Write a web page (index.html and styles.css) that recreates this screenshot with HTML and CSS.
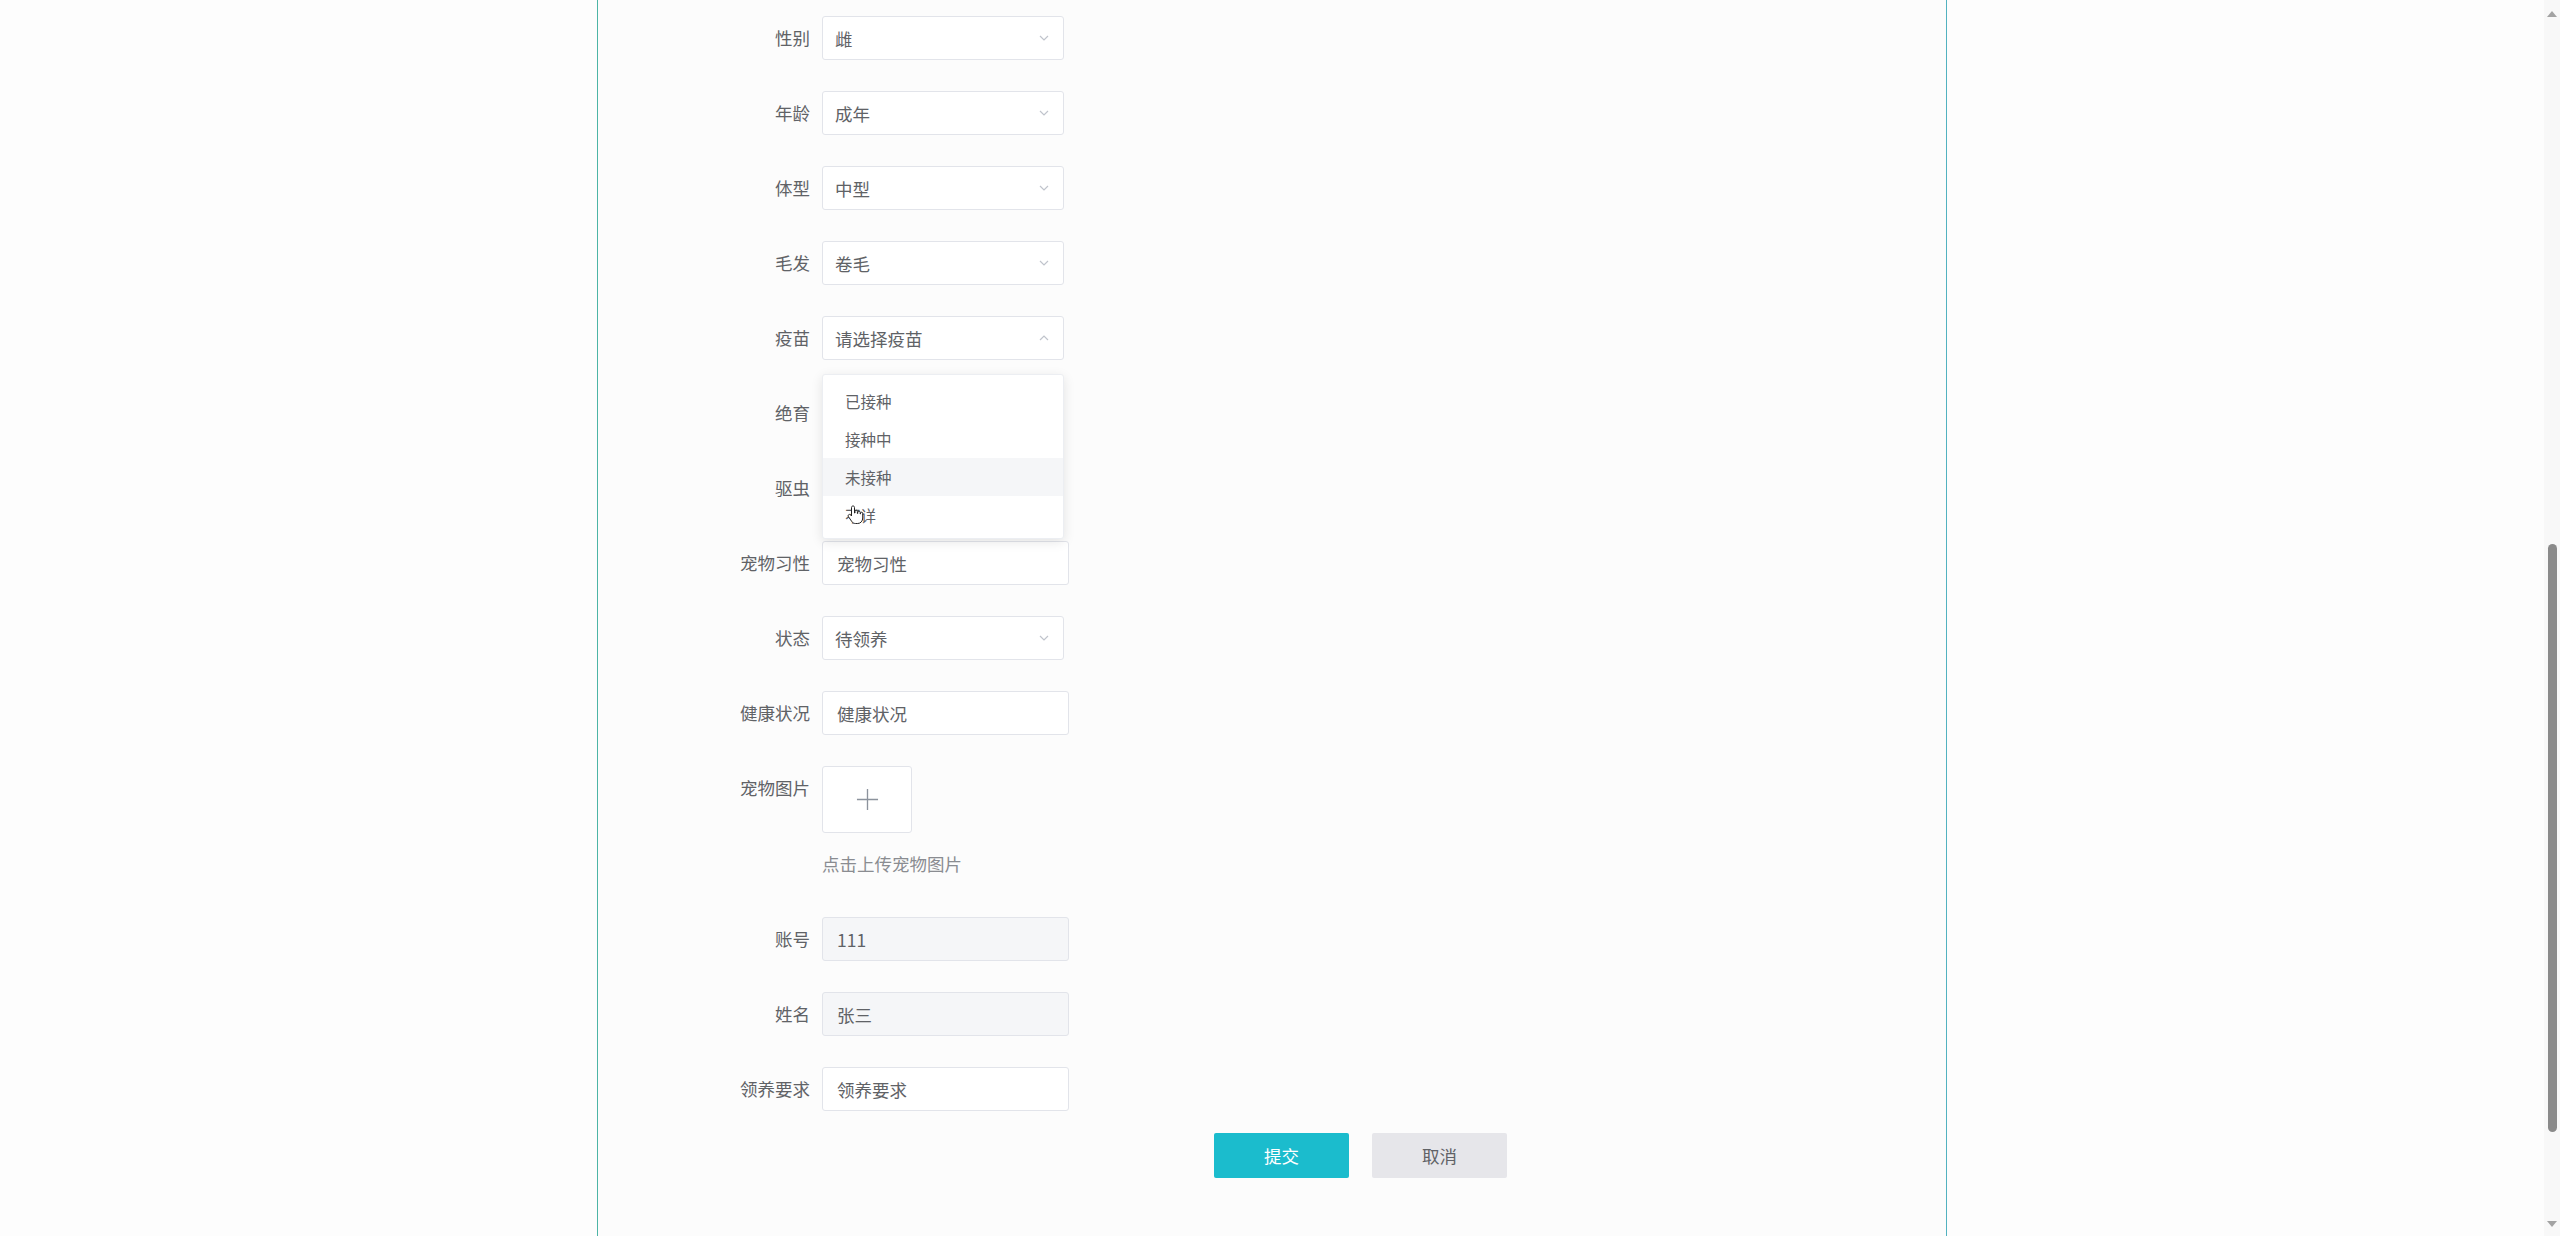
FILE: index.html
```html
<!DOCTYPE html>
<html lang="zh-CN">
<head>
  <meta charset="UTF-8" />
  <meta name="viewport" content="width=device-width, initial-scale=1.0" />
  <title>宠物信息</title>
  <link rel="stylesheet" href="styles.css">
</head>
<body>
  <div class="page">
    <main class="main">
      <section class="panel">
        <form class="pet-form">
          <div class="form-item">
            <label class="form-label">性别</label>
            <div class="select"><span>雌</span><svg class="chevron" viewBox="0 0 10 6"><path d="M1 1l4 4 4-4"/></svg></div>
          </div>
          <div class="form-item">
            <label class="form-label">年龄</label>
            <div class="select"><span>成年</span><svg class="chevron" viewBox="0 0 10 6"><path d="M1 1l4 4 4-4"/></svg></div>
          </div>
          <div class="form-item">
            <label class="form-label">体型</label>
            <div class="select"><span>中型</span><svg class="chevron" viewBox="0 0 10 6"><path d="M1 1l4 4 4-4"/></svg></div>
          </div>
          <div class="form-item">
            <label class="form-label">毛发</label>
            <div class="select"><span>卷毛</span><svg class="chevron" viewBox="0 0 10 6"><path d="M1 1l4 4 4-4"/></svg></div>
          </div>
          <div class="form-item">
            <label class="form-label">疫苗</label>
            <div class="select is-open">
              <span>请选择疫苗</span><svg class="chevron" viewBox="0 0 10 6"><path d="M1 5l4-4 4 4"/></svg>
              <ul class="dropdown">
                <li>已接种</li>
                <li>接种中</li>
                <li class="hover">未接种</li>
                <li>不详</li>
              </ul>
              <svg class="cursor" viewBox="0 0 18 20"><path d="M6 1c1 0 1.5.6 1.5 1.5V8H8V6.5c0-.8.5-1.3 1.2-1.3s1.2.5 1.2 1.3v2h.4V7.3c0-.8.5-1.2 1.2-1.2s1.2.4 1.2 1.2V9h.3v-.7c0-.7.5-1.1 1.1-1.1s1.1.4 1.1 1.1V13c0 3-2 5.5-5 5.5H8.5c-1.7 0-2.9-.8-3.8-2.1L1.4 11.6c-.5-.7-.3-1.6.4-2 .7-.4 1.5-.2 2 .4l.7 1V2.5C4.5 1.6 5 1 6 1z"/></svg>
            </div>
          </div>
          <div class="form-item">
            <label class="form-label">绝育</label>
            <div class="select"><span></span><svg class="chevron" viewBox="0 0 10 6"><path d="M1 1l4 4 4-4"/></svg></div>
          </div>
          <div class="form-item">
            <label class="form-label">驱虫</label>
            <div class="select"><span></span><svg class="chevron" viewBox="0 0 10 6"><path d="M1 1l4 4 4-4"/></svg></div>
          </div>
          <div class="form-item">
            <label class="form-label">宠物习性</label>
            <input class="input" type="text" value="宠物习性">
          </div>
          <div class="form-item">
            <label class="form-label">状态</label>
            <div class="select"><span>待领养</span><svg class="chevron" viewBox="0 0 10 6"><path d="M1 1l4 4 4-4"/></svg></div>
          </div>
          <div class="form-item">
            <label class="form-label">健康状况</label>
            <input class="input" type="text" value="健康状况">
          </div>
          <div class="form-item upload-item">
            <label class="form-label">宠物图片</label>
            <div class="upload">
              <div class="upload-box">
                <svg class="plus" viewBox="0 0 24 24"><path d="M12 1v22M1 12h22"/></svg>
              </div>
              <p class="upload-tip">点击上传宠物图片</p>
            </div>
          </div>
          <div class="form-item">
            <label class="form-label">账号</label>
            <input class="input" type="text" value="111" disabled>
          </div>
          <div class="form-item">
            <label class="form-label">姓名</label>
            <input class="input" type="text" value="张三" disabled>
          </div>
          <div class="form-item last-item">
            <label class="form-label">领养要求</label>
            <input class="input" type="text" value="领养要求">
          </div>
          <div class="actions">
            <button type="button" class="btn btn-primary">提交</button>
            <button type="button" class="btn btn-cancel">取消</button>
          </div>
        </form>
      </section>
    </main>

    <aside class="scrollbar">
      <span class="arrow arrow-up"></span>
      <span class="thumb"></span>
      <span class="arrow arrow-down"></span>
    </aside>
  </div>
</body>
</html>
```

FILE: styles.css
```css
* {
  box-sizing: border-box;
}

html, body {
  height: 100%;
}

body {
  margin: 0;
  padding: 0;
  background: #fdfdfd;
  font-family: "Noto Sans CJK SC", "Noto Sans", sans-serif;
  font-size: 17.5px;
  color: #606266;
  overflow: hidden;
}

.page {
  display: flex;
  height: 100vh;
}

.main {
  flex: 1;
  height: 100%;
}

.panel {
  width: 1350px;
  height: 100%;
  margin: 0 auto;
  background: #fcfcfc;
  border-left: 1px solid #4db5a6;
  border-right: 1px solid #52b2c0;
}

.pet-form {
  padding-top: 16px;
}

.form-item {
  display: flex;
  align-items: flex-start;
  margin-bottom: 31px;
}

.form-label {
  width: 224px;
  padding-right: 12px;
  text-align: right;
  line-height: 44px;
  color: #606266;
}

.select {
  position: relative;
  display: flex;
  align-items: center;
  justify-content: space-between;
  width: 242px;
  height: 44px;
  padding: 0 14px 0 12px;
  background: #fff;
  border: 1px solid #e2e4ea;
  border-radius: 3px;
}

.chevron {
  width: 10px;
  height: 6px;
  fill: none;
  stroke: #c0c4cc;
  stroke-width: 1.2;
}

.dropdown {
  position: absolute;
  top: calc(100% + 15px);
  left: -1px;
  width: 242px;
  margin: 0;
  padding: 7px 0 4px;
  list-style: none;
  background: #fff;
  border: 1px solid #eceef2;
  border-radius: 3px;
  box-shadow: 0 3px 12px rgba(0, 0, 0, 0.1);
  z-index: 5;
}

.dropdown li {
  height: 38px;
  line-height: 38px;
  padding-left: 22px;
  font-size: 15.5px;
  color: #606266;
}

.dropdown li.hover {
  background: #f5f6f8;
}

.cursor {
  position: absolute;
  left: 24px;
  top: 188px;
  width: 18px;
  height: 20px;
  fill: #fff;
  stroke: #222;
  stroke-width: 1;
  z-index: 6;
}

.input {
  width: 247px;
  height: 44px;
  padding: 0 14px;
  font: inherit;
  color: #606266;
  background: #fff;
  border: 1px solid #e2e4ea;
  border-radius: 3px;
  outline: none;
}

.input:disabled {
  background: #f5f6f8;
  color: #606266;
}

.upload-item {
  margin-bottom: 38px;
}

.upload-box {
  display: flex;
  align-items: center;
  justify-content: center;
  width: 90px;
  height: 67px;
  background: #fff;
  border: 1px solid #e2e4ea;
  border-radius: 3px;
}

.plus {
  width: 23px;
  height: 23px;
  stroke: #8c939d;
  stroke-width: 1.4;
}

.upload-tip {
  margin: 16px 0 0;
  line-height: 30px;
  color: #8a8c91;
}

.last-item {
  margin-bottom: 22px;
}

.actions {
  display: flex;
  gap: 23px;
  padding-left: 616px;
}

.btn {
  width: 135px;
  height: 45px;
  font: inherit;
  border: none;
  border-radius: 2px;
  cursor: pointer;
}

.btn-primary {
  background: #1bbccd;
  color: #fff;
}

.btn-cancel {
  background: #e6e6ea;
  color: #606266;
}

.scrollbar {
  display: flex;
  flex-direction: column;
  align-items: center;
  width: 16px;
  height: 100%;
  padding: 11px 0 9px;
  background: #f8f8f8;
}

.arrow {
  width: 0;
  height: 0;
  border-left: 5px solid transparent;
  border-right: 5px solid transparent;
}

.arrow-up {
  border-bottom: 6px solid #a3a3a3;
}

.arrow-down {
  margin-top: auto;
  border-top: 6px solid #a3a3a3;
}

.thumb {
  width: 9px;
  height: 588px;
  margin-top: 527px;
  background: #8a8a8a;
  border-radius: 5px;
}
```
